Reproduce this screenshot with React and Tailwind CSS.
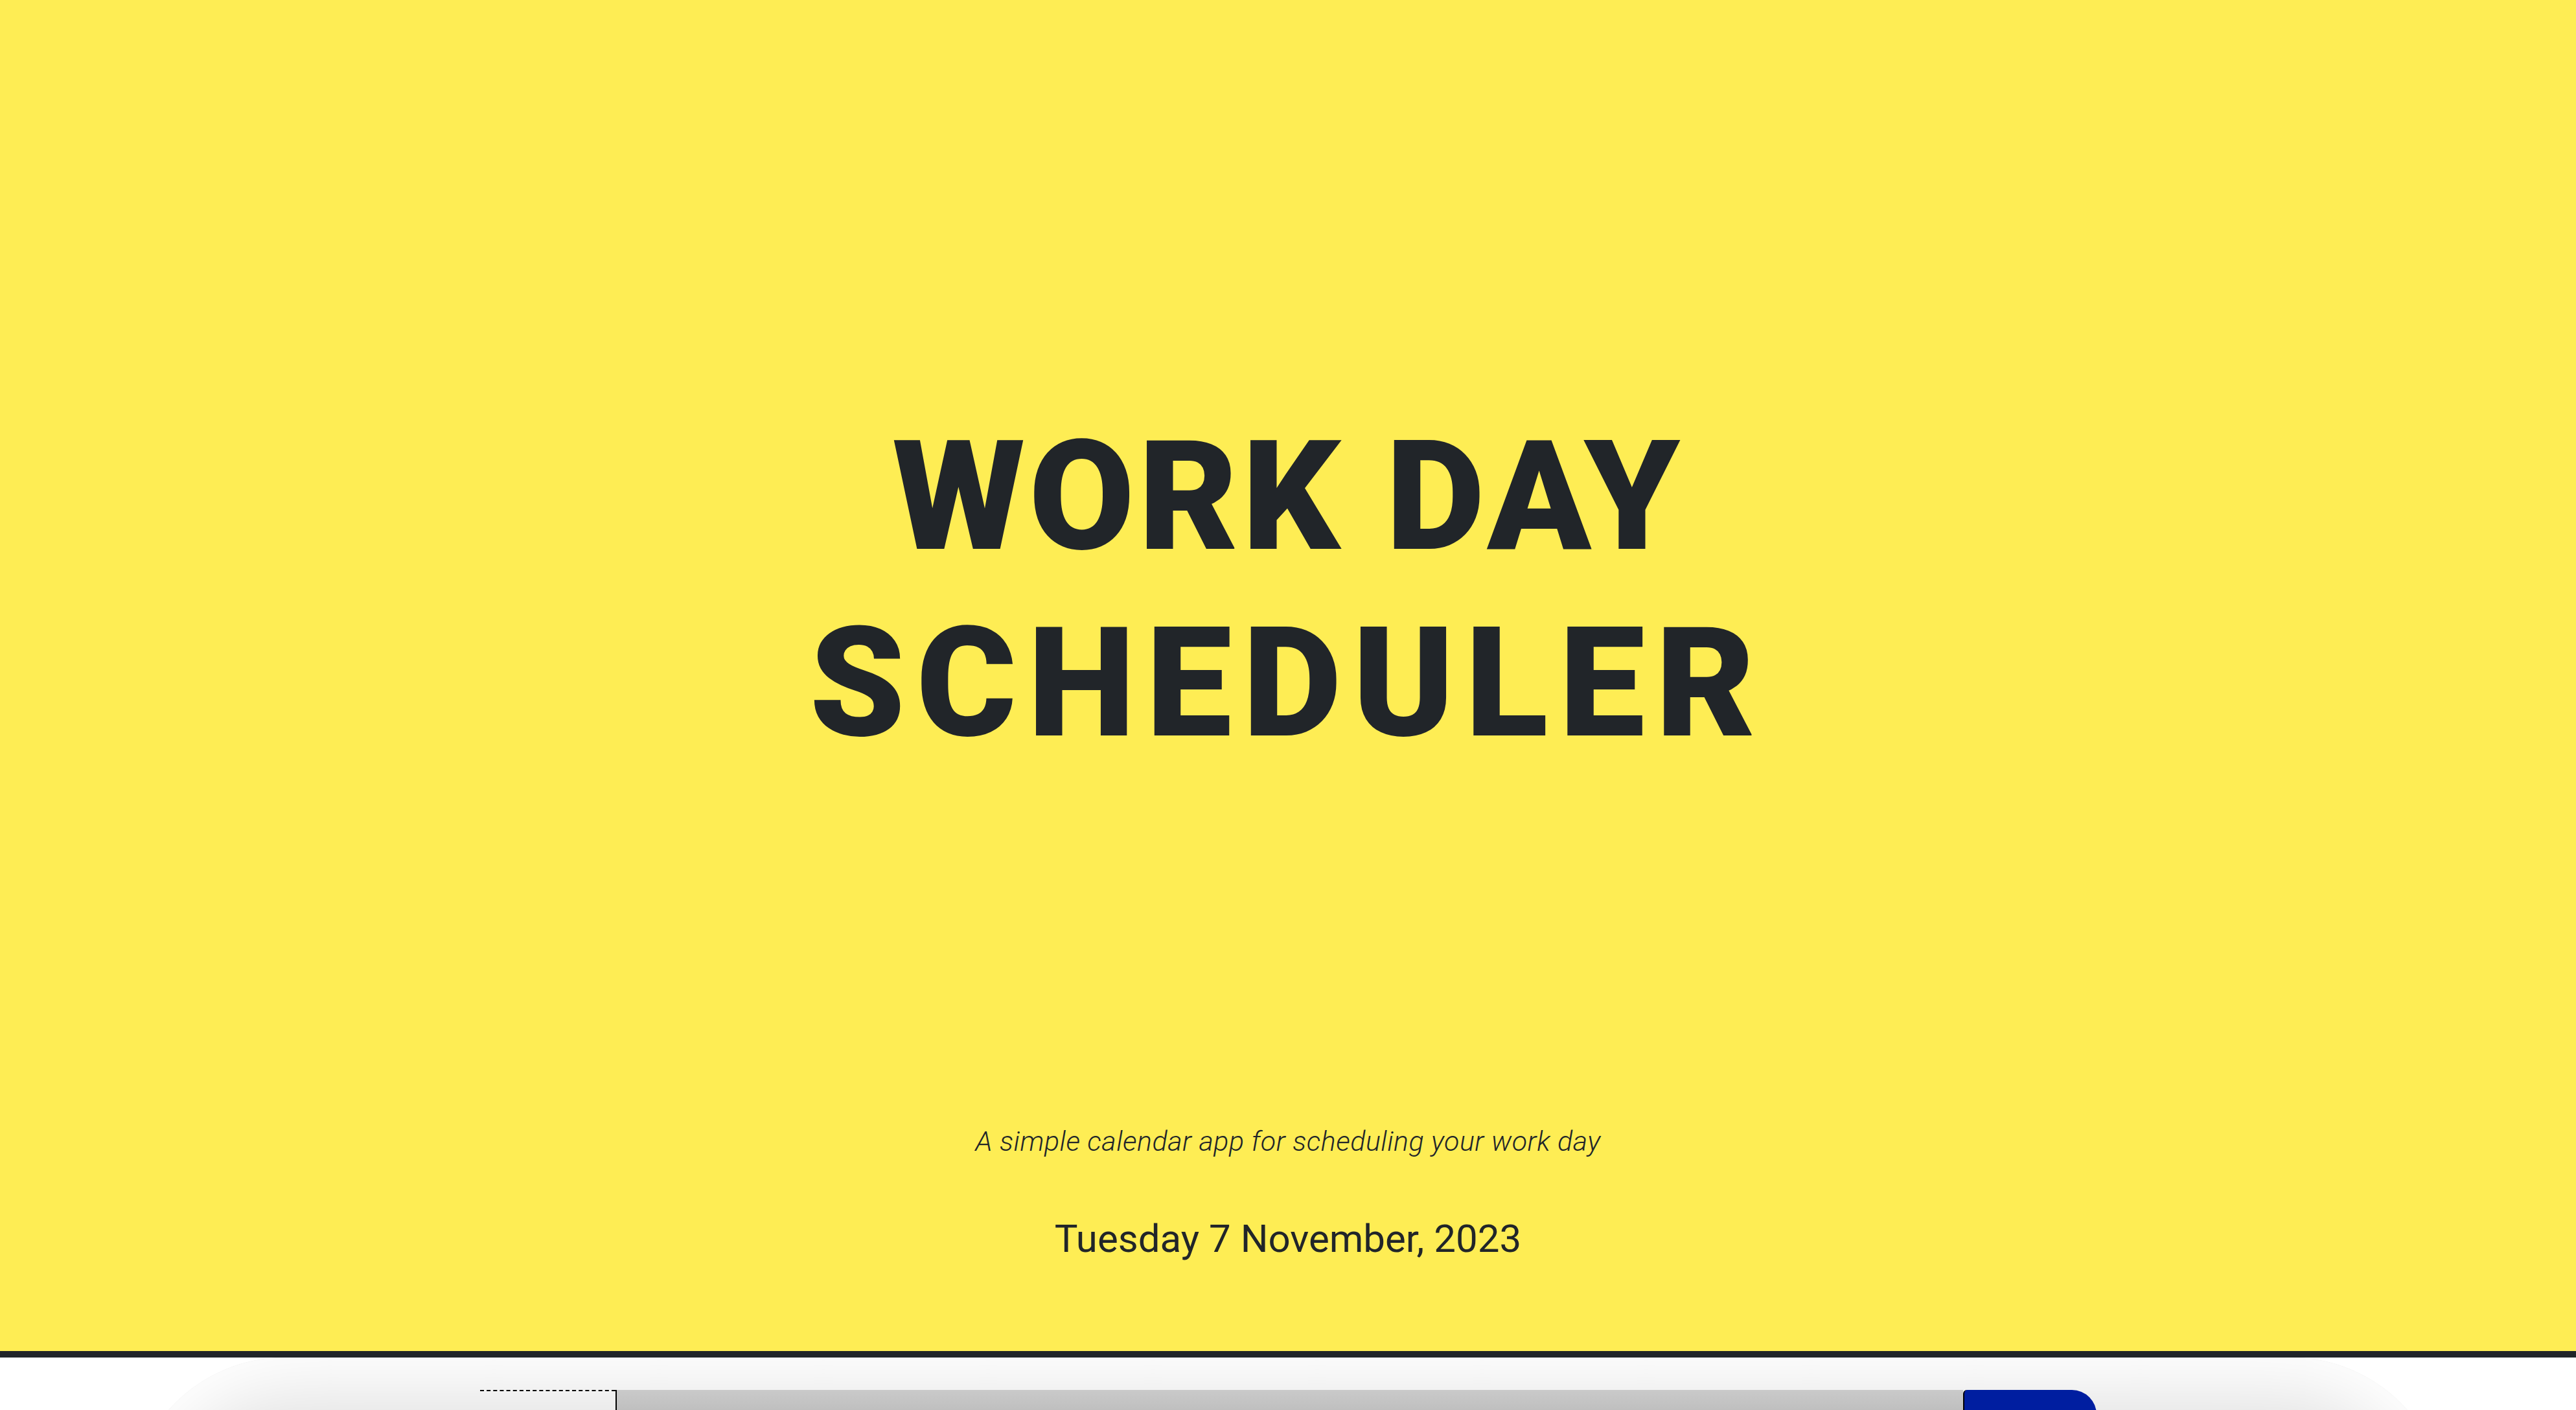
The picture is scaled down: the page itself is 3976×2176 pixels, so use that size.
import { Save } from 'lucide-react';

const hours = ['9AM', '10AM', '11AM', '12PM', '1PM', '2PM', '3PM', '4PM', '5PM'];

const TimeBlock = ({ hour }) => {
  return (
    <div className="flex h-[200px]">
      <div className="flex w-[209px] items-center justify-end border-t-2 border-dashed border-black pr-6 text-[48px] text-[#212529]">
        {hour}
      </div>
      <textarea
        className="flex-1 resize-none border-l-2 border-black bg-gradient-to-b from-[#cacaca] to-[#868686] p-6 text-[48px] text-[#212529] outline-none"
        defaultValue=""
      />
      <button className="flex w-[206px] items-center justify-center rounded-tl-[6px] rounded-tr-[38px] rounded-br-[38px] border-l-2 border-black bg-[#001ea0] text-white">
        <Save className="h-16 w-16" />
      </button>
    </div>
  );
};

export default function App() {
  return (
    <div className="min-h-screen bg-white" style={{ fontFamily: 'Roboto, "Liberation Sans", sans-serif' }}>
      <header className="border-b-[10px] border-[#212529] bg-[#feed54] pt-[623px] pb-[127px] text-center text-[#212529]">
        <h1 className="text-[236px] font-black leading-[288px]">
          <span className="tracking-[6px]">WORK DAY</span>
          <br />
          <span className="tracking-[17px]">SCHEDULER</span>
        </h1>
        <p className="mt-[532px] text-[43px] font-light italic leading-[61.5px] tracking-[0.5px]">
          A simple calendar app for scheduling your work day
        </p>
        <p className="mt-[72px] text-[60px] leading-[93px]">Tuesday 7 November, 2023</p>
      </header>

      <main className="mx-[200px] rounded-[240px] bg-[#e0e0e0] pt-[50px] pb-[200px] shadow-[inset_0_0_120px_60px_#ffffff]">
        <div className="mx-auto w-[2495px]">
          {hours.map((hour) => (
            <TimeBlock key={hour} hour={hour} />
          ))}
        </div>
      </main>
    </div>
  );
}
